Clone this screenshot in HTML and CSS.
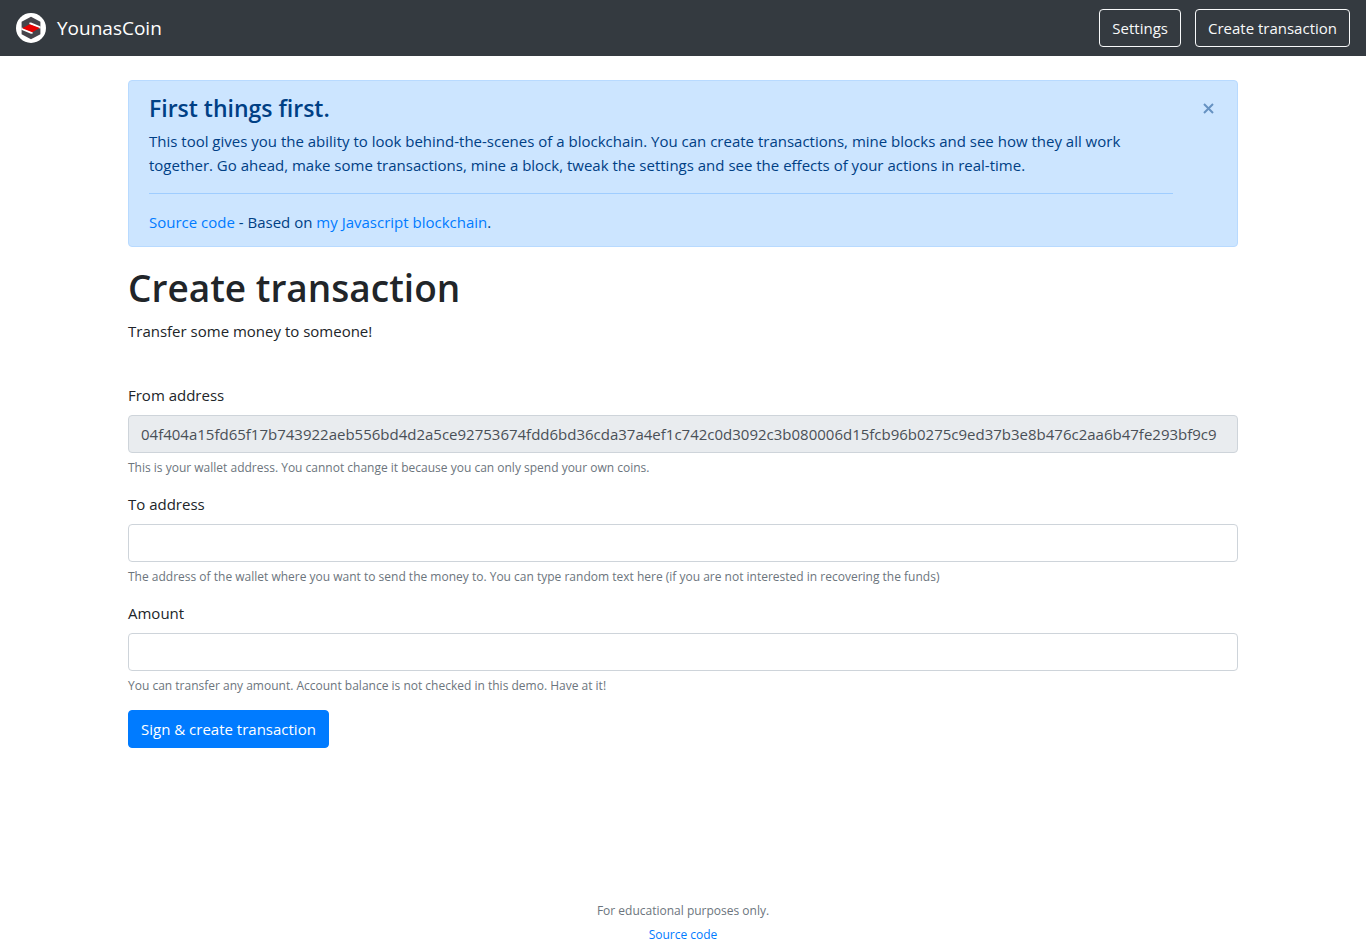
FILE: index.html
```html
<!DOCTYPE html>
<html lang="en">
<head>
<meta charset="utf-8">
<meta name="viewport" content="width=device-width, initial-scale=1">
<title>YounasCoin</title>
<link rel="stylesheet" href="styles.css">
</head>
<body>
<nav class="navbar">
  <a class="brand" href="#">
    <svg class="brand-logo" viewBox="0 0 30 30" aria-hidden="true">
      <circle cx="15" cy="15" r="15" fill="#fff"/>
      <path d="M15 3.8 24.4 8.8V21.2L15 26.2 5.6 21.2V8.8Z" fill="#46454b"/>
      <path d="M13.2 9.8 15 9.4 24.6 13.4V15.6L22.8 15.2 13.6 11.6Z" fill="#fff"/>
      <path d="M5.4 14.6 7.2 15 16.4 18.8 16.8 20.4 15 20.8 5.4 16.8Z" fill="#fff"/>
      <path d="M6.2 15.2 13.8 11.2 23.8 15 16.2 19.2Z" fill="#e60000"/>
    </svg>
    <span>YounasCoin</span>
  </a>
  <div class="nav-actions">
    <a class="btn btn-outline" href="#settings">Settings</a>
    <a class="btn btn-outline" href="#create">Create transaction</a>
  </div>
</nav>
<main class="container" id="create">
  <section class="alert" role="alert">
    <div class="alert-body">
      <h4 class="alert-heading">First things first.</h4>
      <p class="alert-text">This tool gives you the ability to look behind-the-scenes of a blockchain. You can create transactions, mine blocks and see how they all work together. Go ahead, make some transactions, mine a block, tweak the settings and see the effects of your actions in real-time.</p>
      <hr class="alert-rule">
      <p class="alert-text"><a href="#source">Source code</a> - Based on <a href="#blockchain">my Javascript blockchain</a>.</p>
    </div>
    <button class="close" type="button" aria-label="Close">
      <svg class="close-icon" viewBox="0 0 11 11" aria-hidden="true"><path d="M1 1 10 10M10 1 1 10"/></svg>
    </button>
  </section>
  <h1 class="title">Create transaction</h1>
  <p class="lead">Transfer some money to someone!</p>
  <form class="form">
    <div class="form-group">
      <label for="from">From address</label>
      <input class="control" id="from" type="text" disabled aria-describedby="from-help" value="04f404a15fd65f17b743922aeb556bd4d2a5ce92753674fdd6bd36cda37a4ef1c742c0d3092c3b080006d15fcb96b0275c9ed37b3e8b476c2aa6b47fe293bf9c9">
      <small class="help" id="from-help">This is your wallet address. You cannot change it because you can only spend your own coins.</small>
    </div>
    <div class="form-group">
      <label for="to">To address</label>
      <input class="control" id="to" type="text" aria-describedby="to-help">
      <small class="help" id="to-help">The address of the wallet where you want to send the money to. You can type random text here (if you are not interested in recovering the funds)</small>
    </div>
    <div class="form-group">
      <label for="amount">Amount</label>
      <input class="control" id="amount" type="text" inputmode="decimal" aria-describedby="amount-help">
      <small class="help" id="amount-help">You can transfer any amount. Account balance is not checked in this demo. Have at it!</small>
    </div>
    <button class="btn btn-primary" type="button">Sign &amp; create transaction</button>
  </form>
</main>
<footer class="footer">
  <p>For educational purposes only.</p>
  <p><a href="#source">Source code</a></p>
</footer>
</body>
</html>
```
FILE: styles.css
```css
*, *::before, *::after { box-sizing: border-box; }
body {
  margin: 0;
  min-height: 100vh;
  display: flex;
  flex-direction: column;
  background: #fff;
  color: #212529;
  font: 400 15px/24px "Segoe UI", "Open Sans", "Noto Sans", sans-serif;
}
h1, h4, p { margin: 0; }
a { color: #007bff; text-decoration: none; }
.navbar {
  display: flex;
  align-items: center;
  justify-content: space-between;
  min-height: 56px;
  padding: 8px 16px;
  background: #343a40;
}
.brand {
  display: flex;
  align-items: center;
  gap: 11px;
  color: #fff;
  font-size: 19px;
}
.brand-logo { width: 30px; height: 30px; }
.nav-actions { display: flex; gap: 14px; }
.btn {
  padding: 6px 12px;
  border: 1px solid transparent;
  border-radius: 4px;
  font: inherit;
  cursor: pointer;
}
.btn-outline { border-color: #f8f9fa; color: #f8f9fa; }
.btn-primary { background: #007bff; border-color: #007bff; color: #fff; }
.container {
  width: 100%;
  max-width: 1140px;
  margin: 24px auto;
  padding: 0 15px;
}
.alert {
  display: flex;
  align-items: flex-start;
  margin-bottom: 16px;
  padding: 12px 20px;
  border: 1px solid #b8daff;
  border-radius: 4px;
  background: #cce5ff;
  color: #004085;
}
.alert-body { flex: 1; }
.alert-heading {
  margin-bottom: 6px;
  font-size: 23px;
  font-weight: 600;
  line-height: 30px;
}
.alert-rule {
  margin: 16px 0;
  border: 0;
  border-top: 1px solid #9fcdff;
}
.close {
  width: 44px;
  height: 32px;
  padding: 0;
  border: 0;
  background: none;
  text-align: right;
  cursor: pointer;
}
.close-icon {
  width: 11px;
  height: 11px;
  margin-right: 3px;
  fill: none;
  stroke: #6692c2;
  stroke-width: 2;
}
.title {
  margin-bottom: 6px;
  font-size: 37px;
  font-weight: 600;
  line-height: 50px;
}
.lead { margin-bottom: 40px; }
.form-group {
  display: flex;
  flex-direction: column;
  margin-bottom: 14px;
}
.form-group label { margin-bottom: 8px; }
.control {
  width: 100%;
  height: 38px;
  padding: 6px 12px;
  border: 1px solid #ced4da;
  border-radius: 4px;
  background: #fff;
  color: #495057;
  font: inherit;
}
.control:disabled { background: #e9ecef; }
.help {
  margin-top: 5px;
  color: #6c757d;
  font-size: 12px;
  line-height: 20px;
}
.footer {
  display: grid;
  gap: 2px;
  margin-top: auto;
  color: #6c757d;
  font-size: 12px;
  line-height: 22px;
  text-align: center;
}
```
